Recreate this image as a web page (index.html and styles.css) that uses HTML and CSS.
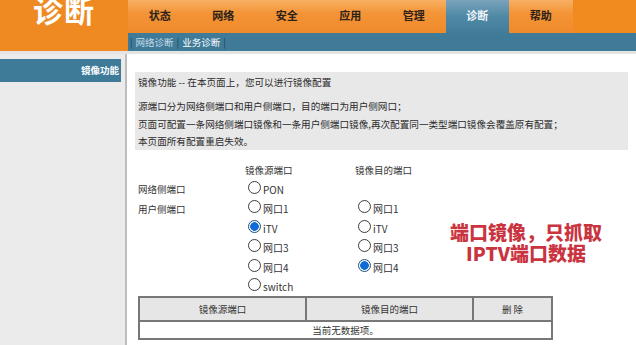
FILE: index.html
```html
<!DOCTYPE html>
<html lang="zh-CN">
<head>
    <meta charset="UTF-8">
    <title>诊断 - 镜像功能</title>
    <link rel="stylesheet" href="styles.css">
</head>
<body>
<div class="header">
    <div class="logo">诊断</div>
    <div class="nav">
        <div class="tabs">
            <div class="tab">状态</div>
            <div class="tab">网络</div>
            <div class="tab">安全</div>
            <div class="tab">应用</div>
            <div class="tab">管理</div>
            <div class="tab active">诊断</div>
            <div class="tab">帮助</div>
        </div>
        <div class="subnav">
            <span class="bar">|</span>
            <span class="sub dim">网络诊断</span>
            <span class="bar">|</span>
            <span class="sub">业务诊断</span>
            <span class="bar">|</span>
        </div>
    </div>
</div>

<div class="main">
    <div class="sidebar">
        <div class="menu-item">镜像功能</div>
    </div>

    <div class="content">
        <div class="intro">
            <p class="title">镜像功能 -- 在本页面上，您可以进行镜像配置</p>
            <p>源端口分为网络侧端口和用户侧端口，目的端口为用户侧网口；<br>
               页面可配置一条网络侧端口镜像和一条用户侧端口镜像,再次配置同一类型端口镜像会覆盖原有配置；<br>
               本页面所有配置重启失效。</p>
        </div>

        <div class="form">
            <div></div>
            <div class="col-head">镜像源端口</div>
            <div class="col-head">镜像目的端口</div>

            <div class="row-label">网络侧端口</div>
            <label class="radio"><span class="dot"></span>PON</label>
            <div></div>

            <div class="row-label">用户侧端口</div>
            <label class="radio"><span class="dot"></span>网口1</label>
            <label class="radio"><span class="dot"></span>网口1</label>

            <div></div>
            <label class="radio"><span class="dot checked"></span>iTV</label>
            <label class="radio"><span class="dot"></span>iTV</label>

            <div></div>
            <label class="radio"><span class="dot"></span>网口3</label>
            <label class="radio"><span class="dot"></span>网口3</label>

            <div></div>
            <label class="radio"><span class="dot"></span>网口4</label>
            <label class="radio"><span class="dot checked"></span>网口4</label>

            <div></div>
            <label class="radio"><span class="dot"></span>switch</label>
            <div></div>
        </div>

        <table class="list">
            <tr>
                <th class="c1">镜像源端口</th>
                <th class="c2">镜像目的端口</th>
                <th>删 除</th>
            </tr>
            <tr>
                <td colspan="3">当前无数据项。</td>
            </tr>
        </table>

        <div class="note">
            <div>端口镜像，只抓取</div>
            <div>IPTV端口数据</div>
        </div>
    </div>
</div>
</body>
</html>
```

FILE: styles.css
```css
body {
    margin: 0;
    font-family: "Noto Sans CJK SC", "Noto Sans", sans-serif;
    font-size: 10px;
    color: #2b2b2b;
    background: #fff;
    overflow: hidden;
}

p {
    margin: 0;
}

.header {
    display: flex;
    height: 51px;
}

.logo {
    width: 128px;
    flex: none;
    background: #ef8a22;
    color: #fff;
    font-size: 30px;
    font-weight: bold;
    line-height: 18px;
    text-align: center;
    letter-spacing: 1px;
    overflow: hidden;
}

.nav {
    flex: 1;
    display: flex;
    flex-direction: column;
}

.tabs {
    height: 33px;
    display: flex;
    background: #f18b1f;
}

.tab {
    width: 63.5px;
    background: linear-gradient(#f8b062, #f39437 40%, #f08a2a);
    font-size: 11px;
    font-weight: bold;
    color: #2e2218;
    text-align: center;
    line-height: 31px;
}

.tab.active {
    background: linear-gradient(#79a3bb, #4f89a6 50%, #417d9b);
    color: #f2f6f8;
}

.subnav {
    flex: 1;
    background: #3f7b98;
    color: #fff;
    font-size: 9.5px;
    line-height: 18px;
    padding-left: 2px;
    display: flex;
    gap: 3px;
}

.subnav .bar {
    color: #1d3e50;
}

.subnav .dim {
    color: #c9dde8;
}

.main {
    display: flex;
    height: 294px;
    border-top: 3px solid #e4e4e4;
}

.sidebar {
    width: 125px;
    flex: none;
    background: #ebebeb;
    border-right: 2px solid #bdbdbd;
    padding-top: 5px;
}

.menu-item {
    width: 121px;
    height: 23px;
    background: #3e7b99;
    color: #fff;
    font-size: 9.5px;
    font-weight: bold;
    text-align: right;
    line-height: 23px;
    box-sizing: border-box;
    padding-right: 2px;
}

.content {
    flex: 1;
    position: relative;
    padding: 18px 8px 0 8px;
}

.intro {
    width: 493px;
    height: 78px;
    background: #e8e8e8;
    padding: 0 3px;
    box-sizing: border-box;
    font-size: 9.6px;
}

.intro .title {
    line-height: 18px;
    padding-top: 1px;
    margin-bottom: 7px;
}

.intro p {
    line-height: 17.5px;
}

.form {
    display: grid;
    grid-template-columns: 107px 110px 1fr;
    grid-auto-rows: 19.5px;
    margin-top: 10px;
    padding-left: 3px;
    align-items: center;
    color: #333;
}

.col-head,
.row-label {
    font-size: 9.5px;
}

.radio {
    display: flex;
    align-items: center;
    padding-left: 3px;
    font-family: "Noto Sans CJK SC", "Open Sans", sans-serif;
    font-size: 10px;
}

.dot {
    width: 11px;
    height: 11px;
    border: 1px solid #3c3c3c;
    border-radius: 50%;
    margin-right: 2px;
    position: relative;
    top: -2px;
    background: #fff;
}

.dot.checked {
    border-color: #1a4f7a;
    background: radial-gradient(circle, #0f6bd6 0 4px, #fff 4.6px);
}

.list {
    width: 415px;
    margin-left: 3px;
    margin-top: -1px;
    border-collapse: collapse;
    border: 2px solid #777;
    font-size: 9.5px;
    color: #333;
}

.list th {
    height: 20px;
    background: #e6e6e6;
    border: 2px solid #777;
    font-weight: normal;
}

.list .c1,
.list .c2 {
    width: 163px;
}

.list td {
    height: 16px;
    text-align: center;
    padding: 0;
    line-height: 16px;
}

.note {
    position: absolute;
    left: 314px;
    top: 167px;
    width: 170px;
    text-align: center;
    font-size: 19px;
    font-weight: 900;
    line-height: 21px;
    color: #c9343f;
    text-shadow: 0 0 2px #fff, 0 0 2px #fff;
}
```
